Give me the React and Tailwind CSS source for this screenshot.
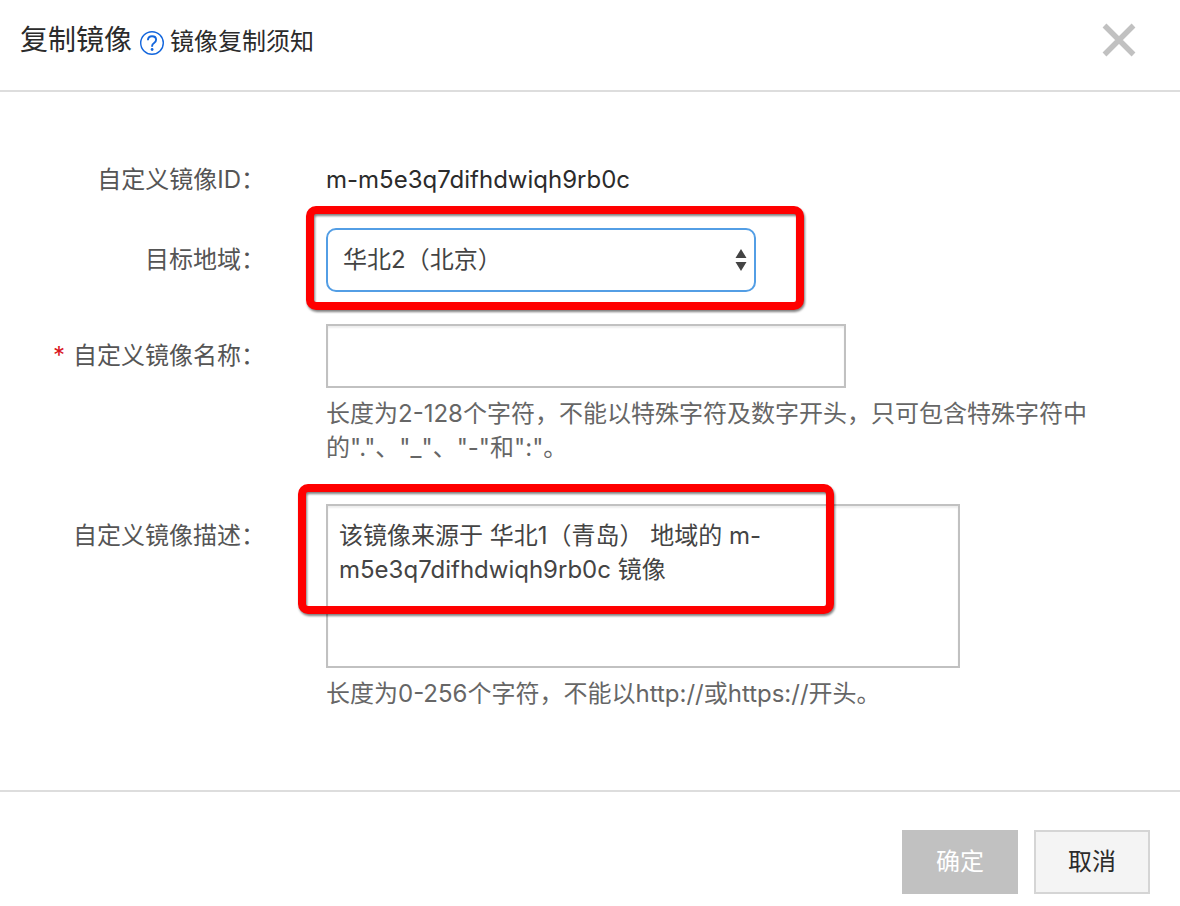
import { useState } from "react";

const DEFAULT_DESCRIPTION =
  "该镜像来源于 华北1（青岛） 地域的 m-m5e3q7difhdwiqh9rb0c 镜像";

function HelpIcon() {
  return (
    <svg viewBox="0 0 24 24" className="size-6 shrink-0" fill="none" aria-hidden="true">
      <circle cx="12" cy="12" r="11.3" stroke="#1366dd" strokeWidth="1.4" />
      <path
        d="M7.9 9.3C8 6.7 9.6 5.3 12 5.3c2.5 0 4.1 1.4 4.1 3.5 0 1.5-.8 2.4-2 3.2-1.5 1-2 1.7-2 3v.7"
        stroke="#1366dd"
        strokeWidth="1.9"
      />
      <circle cx="12.1" cy="18.5" r="1.4" fill="#1366dd" />
    </svg>
  );
}

function CloseIcon() {
  return (
    <svg viewBox="0 0 34 34" className="size-[34px]" aria-hidden="true">
      <path d="M2.5 2.5l29 29M31.5 2.5l-29 29" stroke="#c1c1c1" strokeWidth="5.4" />
    </svg>
  );
}

function Label({ htmlFor, required, children, className = "" }) {
  return (
    <label htmlFor={htmlFor} className={`w-[265px] shrink-0 text-right text-[#555555] ${className}`}>
      {required && <span className="mr-2 text-[#d9141e]">*</span>}
      {children}
    </label>
  );
}

export default function App() {
  const [region, setRegion] = useState("cn-beijing");
  const [name, setName] = useState("");
  const [description, setDescription] = useState(DEFAULT_DESCRIPTION);

  return (
    <div
      role="dialog"
      aria-labelledby="dialog-title"
      className="bg-white font-[Inter,'Noto_Sans_CJK_SC',sans-serif] text-[24px] leading-8 text-[#2b2b2b]"
    >
      <header className="flex items-center justify-between border-b-2 border-[#dddddd] pt-5 pr-11 pb-[30px] pl-5">
        <div className="flex items-center">
          <h1 id="dialog-title" className="text-[28px] leading-10">
            复制镜像
          </h1>
          <a href="#notice" className="ml-2 flex items-center gap-[6px]">
            <span className="pt-[6px]">
              <HelpIcon />
            </span>
            <span className="pt-1">镜像复制须知</span>
          </a>
        </div>
        <button type="button" aria-label="关闭" className="cursor-pointer">
          <CloseIcon />
        </button>
      </header>

      <form>
        <div className="flex flex-col pt-[72px] pb-[79px]">
          <div className="flex gap-[61px]">
            <div className="w-[265px] shrink-0 text-right text-[#555555]">自定义镜像ID：</div>
            <div>m-m5e3q7difhdwiqh9rb0c</div>
          </div>

          <div className="mt-8 flex gap-[61px]">
            <Label htmlFor="region" className="pt-4">
              目标地域：
            </Label>
            <div className="relative w-[430px]">
              <select
                id="region"
                value={region}
                onChange={(e) => setRegion(e.target.value)}
                className="h-16 w-full appearance-none rounded-[10px] border-2 border-[#539ee5] bg-white px-[15px] text-[#444444] outline-none"
              >
                <option value="cn-beijing">华北2（北京）</option>
              </select>
              <svg
                viewBox="0 0 12 22"
                className="pointer-events-none absolute top-[21px] right-[9px] h-[22px] w-3"
                fill="#444444"
                aria-hidden="true"
              >
                <path d="M6 0l5.5 9H.5zM6 22L.5 13h11z" />
              </svg>
              <div className="pointer-events-none absolute -top-[22px] -left-5 h-[104px] w-[498px] rounded-[10px] border-8 border-[#ff0000] drop-shadow-[1px_2px_1px_rgba(0,0,0,0.5)]" />
            </div>
          </div>

          <div className="mt-8 flex gap-[61px]">
            <Label htmlFor="image-name" required className="pt-4">
              自定义镜像名称：
            </Label>
            <div className="flex-1 pr-20">
              <input
                id="image-name"
                type="text"
                value={name}
                onChange={(e) => setName(e.target.value)}
                className="block h-16 w-full max-w-[520px] border-2 border-[#c1c1c1] bg-white px-3 text-[#444444] shadow-[inset_0_2px_2px_rgba(0,0,0,0.07)] outline-none"
              />
              <p className="mt-[9px] leading-[34px] text-[#666666]">
                长度为2-128个字符，不能以特殊字符及数字开头，只可包含特殊字符中的"."、"_"、"-"和":"。
              </p>
            </div>
          </div>

          <div className="mt-[39px] flex gap-[61px]">
            <Label htmlFor="image-description" className="pt-4">
              自定义镜像描述：
            </Label>
            <div className="relative flex-1 pr-20">
              <textarea
                id="image-description"
                value={description}
                onChange={(e) => setDescription(e.target.value)}
                className="block h-[164px] w-full max-w-[634px] resize-none border-2 border-[#c1c1c1] bg-white px-[11px] py-[13px] leading-[34px] text-[#444444] shadow-[inset_0_2px_2px_rgba(0,0,0,0.07)] outline-none"
              />
              <div className="pointer-events-none absolute -top-5 -left-7 h-[130px] w-[536px] rounded-[10px] border-8 border-[#ff0000] drop-shadow-[1px_2px_1px_rgba(0,0,0,0.5)]" />
              <p className="mt-[9px] leading-[34px] text-[#666666]">
                长度为0-256个字符，不能以http://或https://开头。
              </p>
            </div>
          </div>
        </div>

        <footer className="flex justify-end gap-4 border-t-2 border-[#dddddd] pt-[38px] pr-[30px] pb-3">
          <button type="submit" disabled className="h-16 w-[116px] bg-[#c1c1c1] text-white">
            确定
          </button>
          <button
            type="button"
            className="h-16 w-[116px] cursor-pointer border-2 border-[#d5d5d5] bg-[#f4f4f4]"
          >
            取消
          </button>
        </footer>
      </form>
    </div>
  );
}
